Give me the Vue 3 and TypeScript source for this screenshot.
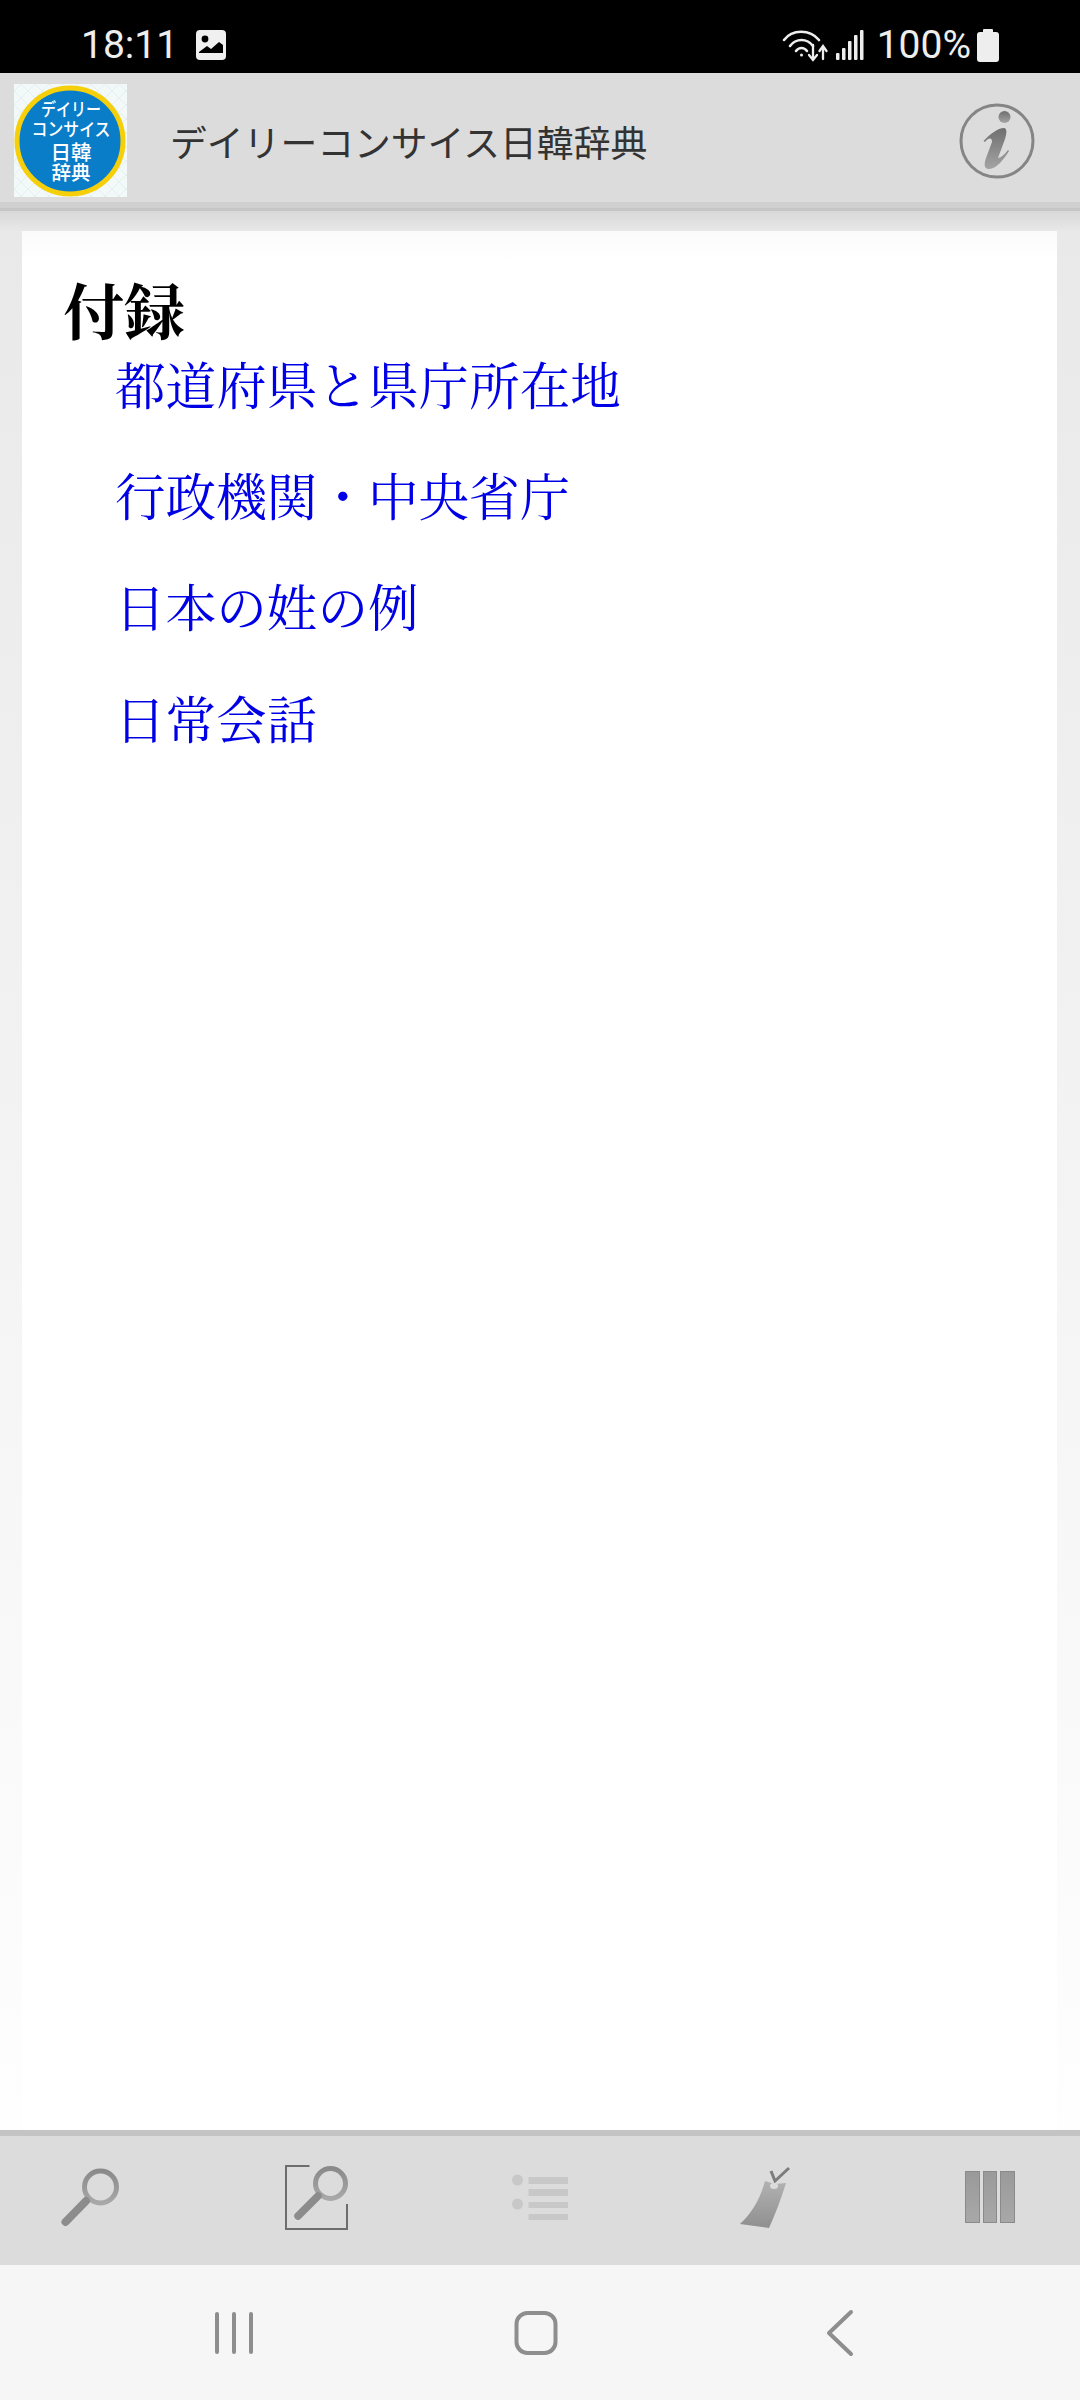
<template>
  <div class="screen">
    <div class="status-bar">
      <div class="status-left">
        <span class="clock">18:11</span>
        <svg class="pic-icon" width="32" height="32" viewBox="0 0 32 32">
          <rect x="1" y="1" width="30" height="30" rx="4" fill="#f0f0f0" />
          <circle cx="10" cy="10" r="3.4" fill="#000" />
          <path d="M4 23 L12 17 L16 20 L24 13 L28 16 V24 H4 Z" fill="#000" />
        </svg>
      </div>
      <div class="status-right">
        <svg class="wifi" width="46" height="34" viewBox="0 0 46 34" fill="none" stroke="#eee" stroke-width="2.6" stroke-linecap="round">
          <path d="M2 12 C10 1 28 1 37 12" />
          <path d="M8 18 C14 10 25 10 31 18" />
          <path d="M14 23 C17 19 22 19 25 23" />
          <circle cx="19.500" cy="27" r="1.500" fill="#eee" stroke="none" />
          <path d="M31 17 V31 M27 27 L31 32 L35 27" stroke-width="2.300" />
          <path d="M41 31 V20 M37.500 23 L41 18 L44.500 23" stroke-width="2.300" />
        </svg>
        <svg class="signal" width="28" height="32" viewBox="0 0 28 32" fill="#eee">
          <rect x="0" y="24" width="3.500" height="7" rx="1" />
          <rect x="6" y="19" width="3.500" height="12" rx="1" />
          <rect x="12" y="12" width="3.500" height="19" rx="1" />
          <rect x="18" y="6" width="3.500" height="25" rx="1" />
          <rect x="24" y="1" width="3.500" height="30" rx="1" />
        </svg>
        <span class="battery-text">100%</span>
        <svg width="22" height="33" viewBox="0 0 22 33" fill="#eee">
          <rect x="6" y="0" width="10" height="4" rx="1" />
          <rect x="0" y="3" width="22" height="30" rx="3" />
        </svg>
      </div>
    </div>

    <header class="app-header">
      <svg class="logo" width="113" height="113" viewBox="0 0 113 113">
        <defs>
          <pattern id="logoBg" width="14" height="14" patternUnits="userSpaceOnUse">
            <rect width="14" height="14" fill="#f3f8f9" />
            <path d="M0 7 L7 0 L14 7 L7 14 Z" fill="none" stroke="#e4eff2" stroke-width="1" />
          </pattern>
        </defs>
        <rect width="113" height="113" fill="url(#logoBg)" />
        <circle cx="56" cy="57" r="53" fill="#0a7dc9" stroke="#f6cf0b" stroke-width="5" />
        <g class="logo-text" fill="#fff" text-anchor="middle">
          <text x="57" y="32" font-size="18" textLength="60" lengthAdjust="spacingAndGlyphs">デイリー</text>
          <text x="57" y="52" font-size="18" textLength="79" lengthAdjust="spacingAndGlyphs">コンサイス</text>
          <text x="57" y="76" font-size="20" textLength="41" lengthAdjust="spacingAndGlyphs">日韓</text>
          <text x="57" y="96" font-size="19" textLength="39" lengthAdjust="spacingAndGlyphs">辞典</text>
        </g>
      </svg>
      <div class="app-title">デイリーコンサイス日韓辞典</div>
      <svg class="info" width="78" height="78" viewBox="0 0 78 78">
        <defs>
          <linearGradient id="infoFill" x1="0" y1="0" x2="0" y2="1">
            <stop offset="0" stop-color="#6f6f6f" />
            <stop offset="1" stop-color="#a4a4a4" />
          </linearGradient>
        </defs>
        <circle cx="39" cy="39" r="36" fill="none" stroke="#858585" stroke-width="3" />
        <circle cx="46.500" cy="15" r="6" fill="url(#infoFill)" />
        <path d="M25.500 39 C32 32 40 26 46 26 C49 26 49 31 47 37 L40 56 C43 56 47 52 50 48 L51 49 C46 57 38 68 30 67 C26 66 26 62 28 56 L34 40 C34 35 30 36 27 40 Z" fill="url(#infoFill)" />
      </svg>
    </header>
    <div class="header-line"></div>

    <main class="content">
      <div class="card">
        <h1 class="heading">付録</h1>
        <ul class="links">
          <li v-for="item in items" :key="item">{{ item }}</li>
        </ul>
      </div>
    </main>

    <footer class="toolbar">
      <div class="tool">
        <svg width="80" height="80" viewBox="0 0 80 80">
          <defs>
            <linearGradient id="grey" x1="0" y1="0" x2="0" y2="1">
              <stop offset="0" stop-color="#8a8a8a" />
              <stop offset="1" stop-color="#a8a8a8" />
            </linearGradient>
          </defs>
          <circle cx="50.500" cy="26" r="16" fill="none" stroke="url(#grey)" stroke-width="5" />
          <path d="M36 40 L15.500 61" stroke="#8c8c8c" stroke-width="8" stroke-linecap="round" />
        </svg>
      </div>
      <div class="tool">
        <svg width="80" height="80" viewBox="0 0 80 80">
          <path d="M34.500 5 H11 V68 H72 V43" fill="none" stroke="#6e6e6e" stroke-width="2" />
          <circle cx="55.500" cy="22.500" r="15" fill="none" stroke="url(#grey)" stroke-width="5" />
          <path d="M43 35 L23 55" stroke="#8c8c8c" stroke-width="7.500" stroke-linecap="round" />
        </svg>
      </div>
      <div class="tool">
        <svg width="80" height="80" viewBox="0 0 80 80" fill="#c8c8c8">
          <circle cx="17.500" cy="19" r="5.500" />
          <circle cx="17.500" cy="43" r="5.500" />
          <rect x="28.500" y="16" width="39.500" height="7" />
          <rect x="28.500" y="28" width="39.500" height="7" />
          <rect x="28.500" y="41" width="39.500" height="6" />
          <rect x="28.500" y="53" width="39.500" height="6" />
        </svg>
      </div>
      <div class="tool">
        <svg width="80" height="80" viewBox="0 0 80 80">
          <defs>
            <linearGradient id="tag" x1="0" y1="0" x2="0" y2="1">
              <stop offset="0" stop-color="#b2b2b2" />
              <stop offset="1" stop-color="#8f8f8f" />
            </linearGradient>
          </defs>
          <path d="M46 10 L50 20 L64 7" fill="none" stroke="#7c7c7c" stroke-width="3" />
          <path d="M40 20 L50 23 L61 22 C56 38 50 54 44 67 L15 63 C27 52 35 38 40 20 Z" fill="url(#tag)" />
          <ellipse cx="49" cy="25" rx="4" ry="3" fill="#dcdcdc" />
        </svg>
      </div>
      <div class="tool">
        <div class="columns">
          <span></span>
          <span></span>
          <span></span>
        </div>
      </div>
    </footer>

    <nav class="nav-bar">
      <svg class="nav-recent" width="40" height="46" viewBox="0 0 40 46" fill="#8e8e8e">
        <rect x="1" y="2" width="4" height="42" rx="2" />
        <rect x="18" y="2" width="4" height="42" rx="2" />
        <rect x="35" y="2" width="4" height="42" rx="2" />
      </svg>
      <svg class="nav-home" width="44" height="46" viewBox="0 0 44 46">
        <rect x="2.500" y="3" width="39" height="40" rx="11" fill="none" stroke="#8e8e8e" stroke-width="4" />
      </svg>
      <svg class="nav-back" width="30" height="48" viewBox="0 0 30 48">
        <path d="M26 3 L4 24 L26 45" fill="none" stroke="#8e8e8e" stroke-width="4" stroke-linecap="round" stroke-linejoin="round" />
      </svg>
    </nav>
  </div>
</template>

<script setup lang="ts">
const items: string[] = [
  '都道府県と県庁所在地',
  '行政機関・中央省庁',
  '日本の姓の例',
  '日常会話',
]
</script>

<style>
html,
body {
  margin: 0;
  background: #fff;
}
</style>

<style scoped>
.screen {
  width: 1080px;
  height: 2400px;
  display: flex;
  flex-direction: column;
  overflow: hidden;
  font-family: Roboto, "Noto Sans CJK JP", sans-serif;
}

.status-bar {
  height: 73px;
  flex: none;
  background: #000;
  color: #eee;
  display: flex;
  align-items: center;
  justify-content: space-between;
  padding: 17px 81px 0 81px;
  box-sizing: border-box;
}

.status-left,
.status-right {
  display: flex;
  align-items: center;
}

.clock {
  font-size: 39px;
  width: 114px;
}

.status-right {
  gap: 8px;
}

.battery-text {
  font-size: 39px;
  margin-left: 5px;
  margin-right: -2px;
}

.app-header {
  height: 129px;
  flex: none;
  background: #dcdcdc;
  display: flex;
  align-items: center;
  padding: 6px 44px 0 14px;
  box-sizing: border-box;
}

.logo {
  flex: none;
}

.logo-text {
  font-family: "Noto Sans CJK JP", sans-serif;
  font-weight: 500;
}

.app-title {
  flex: 1;
  margin-left: 43px;
  font-family: "Noto Sans CJK JP", sans-serif;
  font-size: 36.800px;
  color: #333;
}

.header-line {
  height: 29px;
  flex: none;
  background: linear-gradient(#d0d0d0 0, #d0d0d0 6px, #c6c6c6 6px, #c6c6c6 9px, #d8d8d8 9px, #e8e8e8 100%);
}

.content {
  flex: 1;
  min-height: 0;
  display: flex;
  padding: 0 23px 0 22px;
  background: linear-gradient(#e9e9e9, #fefefe);
}

.card {
  flex: 1;
  background: linear-gradient(#fafafa 0, #fff 30px);
  padding: 43px 0 0 41px;
  font-family: "Noto Serif CJK JP", "Noto Sans CJK JP", serif;
}

.heading {
  margin: 0;
  font-size: 61px;
  line-height: 70px;
  font-weight: 700;
  color: #000;
}

.links {
  list-style: none;
  margin: 0;
  padding: 0 0 0 52px;
  color: #0000e6;
  font-size: 50.600px;
  line-height: 111.200px;
  margin-top: -16px;
}

.toolbar {
  height: 135px;
  flex: none;
  box-sizing: border-box;
  border-top: 6px solid #c4c4c4;
  background: #dcdcdc;
  display: flex;
  align-items: center;
  justify-content: space-between;
  padding: 0 50px;
}

.tool {
  width: 80px;
  height: 80px;
  display: flex;
  align-items: center;
  justify-content: center;
}

.columns {
  display: flex;
  gap: 3px;
  margin-top: -7px;
}

.columns span {
  width: 14.500px;
  height: 52px;
  box-sizing: border-box;
  border: 1px solid #8a8a8a;
  background: linear-gradient(#9a9a9a, #a8a8a8);
}

.nav-bar {
  height: 135px;
  flex: none;
  background: #f6f6f6;
  display: grid;
  grid-template-columns: 468px 302px 1fr;
  align-items: center;
  box-sizing: border-box;
}

.nav-recent {
  justify-self: end;
  margin-right: 214px;
}

.nav-home {
  justify-self: start;
  margin-left: 46px;
}

.nav-back {
  justify-self: start;
  margin-left: 55px;
}
</style>
